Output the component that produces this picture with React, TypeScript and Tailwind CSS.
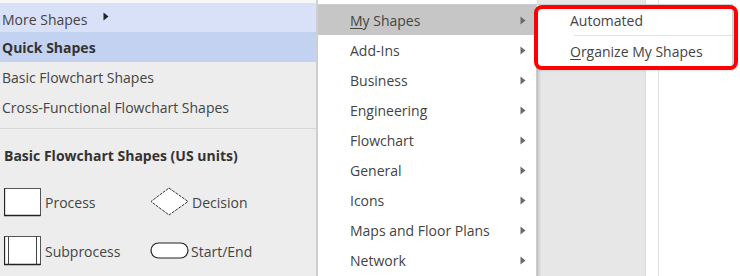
import React from "react";

const font = { fontFamily: '"Open Sans", "Noto Sans", "Liberation Sans", sans-serif' };

function Arrow({ color = "#6a6a6a" }: { color?: string }) {
  return (
    <svg width="6" height="9" viewBox="0 0 6 9" className="shrink-0">
      <path d="M0.5 0.5 L5.5 4.5 L0.5 8.5 Z" fill={color} />
    </svg>
  );
}

const menuItems = [
  "My Shapes",
  "Add-Ins",
  "Business",
  "Engineering",
  "Flowchart",
  "General",
  "Icons",
  "Maps and Floor Plans",
  "Network",
];

export default function App() {
  return (
    <div
      className="relative w-[740px] h-[276px] overflow-hidden bg-white text-[#444] text-[14px]"
      style={font}
    >
      <div className="flex h-full">
        {/* Left shapes panel */}
        <div className="w-[318px] h-full flex flex-col bg-[#ededed] border-r-2 border-[#d2d2d2]">
          <div className="h-[3px] bg-[#f7f7f7]" />
          <div className="h-[29px] flex items-center bg-[#d8e1f8] pl-[2px] pt-[3px]">
            <span>More Shapes</span>
            <span className="ml-[16px] mb-[5px]">
              <Arrow color="#222" />
            </span>
          </div>
          <div className="h-[30px] flex items-center bg-[#c4d2f1] pl-[2px] pt-[1px] font-bold text-[#333]">
            Quick Shapes
          </div>
          <div className="h-[30px] flex items-center pl-[2px] pt-[1px]">Basic Flowchart Shapes</div>
          <div className="h-[30px] flex items-center pl-[2px] pt-[1px]">Cross-Functional Flowchart Shapes</div>
          <div className="mt-[6px] h-px bg-[#d8d8d8]" />
          <div className="mt-[16px] h-[20px] flex items-center pl-[4px] font-bold text-[#333]">
            Basic Flowchart Shapes (US units)
          </div>
          <div className="mt-[22px] grid grid-cols-[146px_1fr] gap-y-[19px] pl-[4px]">
            <div className="flex items-center h-[30px]">
              <svg width="38" height="29" viewBox="0 0 38 29">
                <rect x="0.5" y="0.5" width="36" height="27" fill="#fff" stroke="#555" />
                <path d="M0.5 0.5 L0.5 27.5 L36.5 27.5" fill="none" stroke="#222" strokeWidth="1.3" />
              </svg>
              <span className="ml-[3px]">Process</span>
            </div>
            <div className="flex items-center h-[30px]">
              <svg width="40" height="30" viewBox="0 0 40 30">
                <path
                  d="M19 1 L38 14.5 L19 28 L1 14.5 Z"
                  fill="#fff"
                  stroke="#333"
                  strokeDasharray="3 1"
                />
              </svg>
              <span className="ml-[2px]">Decision</span>
            </div>
            <div className="flex items-center h-[30px]">
              <svg width="38" height="30" viewBox="0 0 38 30">
                <rect x="0.5" y="0.5" width="36" height="28" fill="#fff" stroke="#555" />
                <path d="M0.5 0.5 L0.5 28.5 L36.5 28.5" fill="none" stroke="#222" strokeWidth="1.3" />
                <line x1="4.5" y1="0.5" x2="4.5" y2="28.5" stroke="#444" />
                <line x1="32.5" y1="0.5" x2="32.5" y2="28.5" stroke="#444" />
              </svg>
              <span className="ml-[3px]">Subprocess</span>
            </div>
            <div className="flex items-center h-[30px]">
              <svg width="40" height="18" viewBox="0 0 40 18">
                <rect x="1" y="1" width="37" height="15" rx="7.5" fill="#fff" stroke="#222" strokeWidth="1.2" />
              </svg>
              <span className="ml-[1px]">Start/End</span>
            </div>
          </div>
        </div>

        {/* Background area to the right */}
        <div className="flex-1 flex h-full">
          <div className="w-[219px] h-full bg-white" />
          <div className="w-[109px] h-full bg-[#e7e7e7] border-x border-[#dcdcdc]" />
          <div className="w-[13px] h-full bg-white border-r border-[#e2e2e2]" />
          <div className="flex-1 h-full bg-white" />
        </div>
      </div>

      {/* Dropdown menu */}
      <div className="absolute left-[317px] top-[4px] w-[220px] h-[290px] bg-white border border-[#cdcdcd] shadow-[2px_2px_3px_rgba(0,0,0,0.15)]">
        {menuItems.map((m, i) => (
          <div
            key={m}
            className={`h-[30px] flex items-center justify-between pl-[32px] pr-[10px] ${
              i === 0 ? "bg-[#c6c6c6]" : ""
            }`}
          >
            <span>
              {i === 0 ? (
                <>
                  <u className="underline-offset-2">M</u>y Shapes
                </>
              ) : (
                m
              )}
            </span>
            <Arrow />
          </div>
        ))}
      </div>

      {/* Submenu */}
      <div className="absolute left-[536px] top-[4px] w-[197px] h-[64px] bg-white border border-[#d0d0d0] shadow-[2px_2px_3px_rgba(0,0,0,0.18)] flex flex-col">
        <div className="h-[30px] flex items-center pl-[33px]">Automated</div>
        <div className="ml-[37px] h-px bg-[#e3e3e3]" />
        <div className="h-[31px] flex items-center pl-[33px]">
          <span>
            <u className="underline-offset-2">O</u>rganize My Shapes
          </span>
        </div>
      </div>

      {/* Red highlight box */}
      <div className="absolute left-[534px] top-[5px] w-[204px] h-[65px] border-4 border-[#ff0000] rounded-[8px]" />
    </div>
  );
}
